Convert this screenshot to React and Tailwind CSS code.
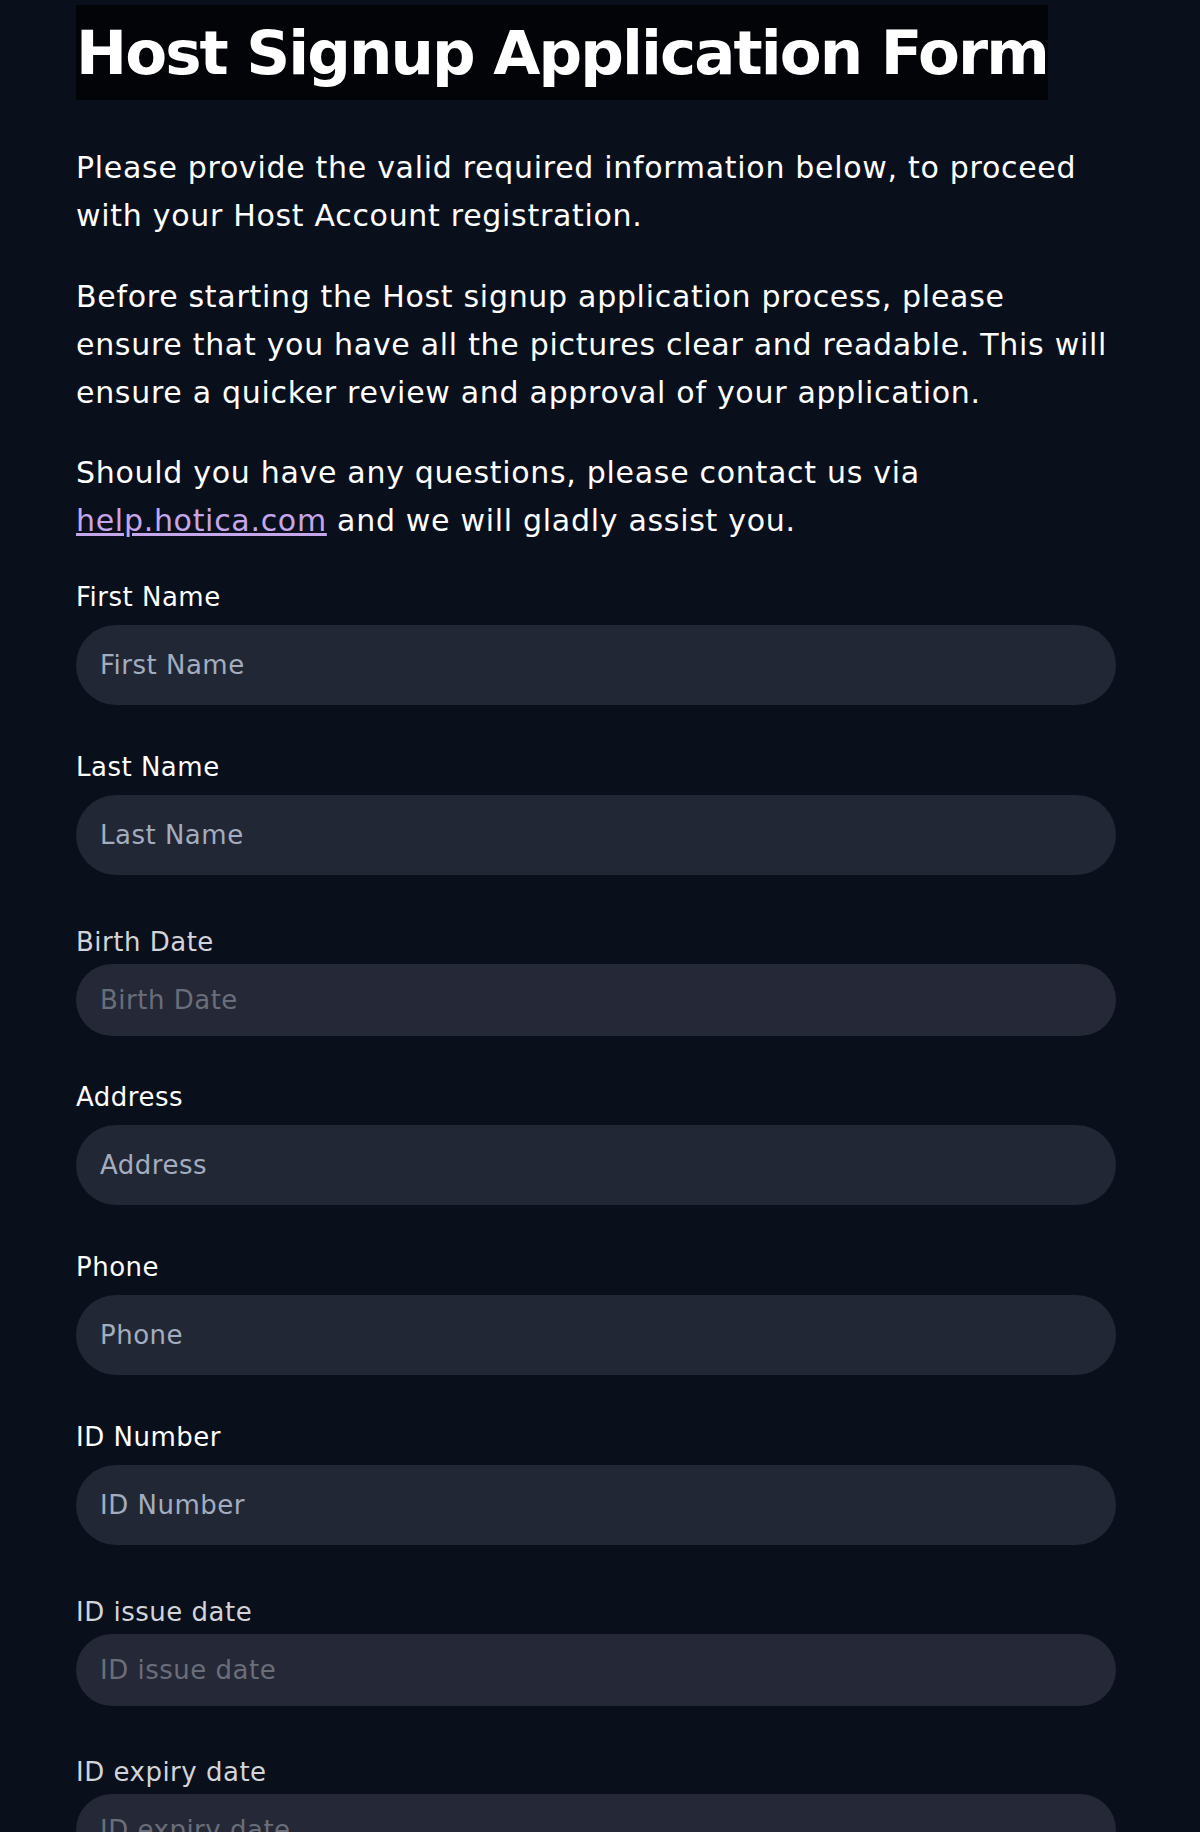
import { useState } from 'react';

const fields = [
  { name: 'firstName', label: 'First Name' },
  { name: 'lastName', label: 'Last Name' },
  { name: 'birthDate', label: 'Birth Date', date: true },
  { name: 'address', label: 'Address' },
  { name: 'phone', label: 'Phone' },
  { name: 'idNumber', label: 'ID Number' },
  { name: 'idIssueDate', label: 'ID issue date', date: true },
  { name: 'idExpiryDate', label: 'ID expiry date', date: true },
];

function Field({ field, value, onChange }) {
  if (field.date) {
    return (
      <div className="mb-[41px]">
        <label htmlFor={field.name} className="block pt-[5px] text-[26px] leading-[40px] tracking-[0.5px] text-[#d2d4d9]">
          {field.label}
        </label>
        <input
          id={field.name}
          name={field.name}
          type="text"
          readOnly
          placeholder={field.label}
          className="mt-[2px] block h-[72px] w-full rounded-full bg-[#252836] px-6 text-[26px] tracking-[0.5px] text-white placeholder:text-[#6a6e7a] focus:outline-none"
        />
      </div>
    );
  }
  return (
    <div className="mb-[42px]">
      <label htmlFor={field.name} className="block text-[26px] leading-[40px] tracking-[0.5px] text-white">
        {field.label}
      </label>
      <input
        id={field.name}
        name={field.name}
        type="text"
        value={value}
        onChange={e => onChange(field.name, e.target.value)}
        placeholder={field.label}
        className="mt-2 block h-[80px] w-full rounded-full bg-[#222735] px-6 text-[26px] tracking-[0.5px] text-white placeholder:text-[#a3adbf] focus:outline-none"
      />
    </div>
  );
}

export default function App() {
  const [form, setForm] = useState({});

  const handleChange = (name, val) => {
    setForm({ ...form, [name]: val });
  };

  return (
    <div className="min-h-screen bg-[#0a0f1c] font-['DejaVu_Sans',sans-serif]">
      <div className="ml-[76px] w-[1040px] pt-[5px]">
        <h1 className="w-fit bg-[#030408] text-[61px] font-bold leading-[95px] tracking-[-1.9px] text-white">
          Host Signup Application Form
        </h1>

        <div className="mt-[44px] text-[30px] leading-[48px] tracking-[0.7px] text-white">
          <p>
            Please provide the valid required information below, to proceed with your Host Account registration.
          </p>
          <p className="mt-[33px]">
            Before starting the Host signup application process, please ensure that you have all the pictures clear and readable. This will ensure a quicker review and approval of your application.
          </p>
          <p className="mt-[32px]">
            Should you have any questions, please contact us via{' '}
            <a href="#" className="text-[#c5a6ea] underline">help.hotica.com</a> and we will gladly assist you.
          </p>
        </div>

        <form className="mt-[32px]" onSubmit={e => e.preventDefault()}>
          {fields.map(f => (
            <Field key={f.name} field={f} value={form[f.name] || ''} onChange={handleChange} />
          ))}
        </form>
      </div>
    </div>
  );
}
